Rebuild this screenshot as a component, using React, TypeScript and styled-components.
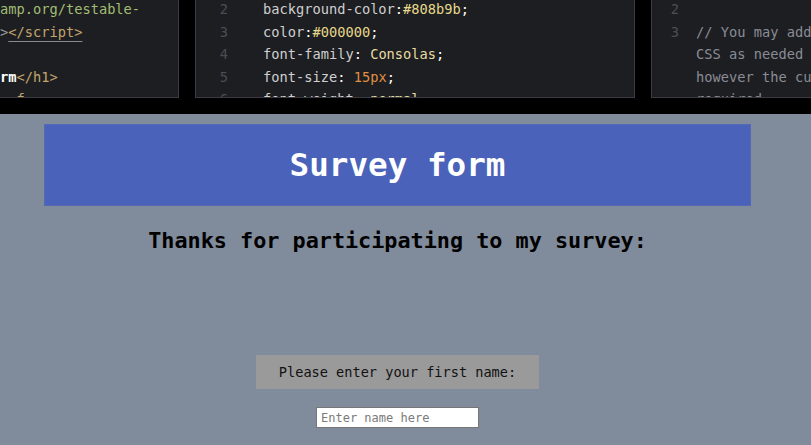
import React from "react";
import styled, { createGlobalStyle } from "styled-components";

const Global = createGlobalStyle`
  html, body { margin: 0; padding: 0; background: #000; overflow: hidden; }
  #root { width: 811px; height: 445px; }
  * { box-sizing: border-box; }
`;

const MONO = `"DejaVu Sans Mono", "Liberation Mono", monospace`;

const Page = styled.div`
  width: 811px;
  height: 445px;
  display: flex;
  flex-direction: column;
  background: #000;
`;

const Editors = styled.div`
  height: 98px;
  display: flex;
  gap: 16px;
  background: #000;
  flex: none;
`;

const Pane = styled.div<{ $w?: number; $left?: boolean; $right?: boolean }>`
  ${(p) => (p.$w ? `width: ${p.$w}px; flex: none;` : "flex: 1;")}
  height: 98px;
  background: #1d1e22;
  border-bottom: 1px solid #3b3c42;
  ${(p) => (p.$left ? "border-left: 1px solid #3b3c42;" : "")}
  ${(p) => (p.$right ? "border-right: 1px solid #3b3c42;" : "")}
  overflow: hidden;
`;

const Code = styled.div`
  margin-top: -2px;
  font-family: ${MONO};
  font-size: 13.7px;
  line-height: 22.5px;
  white-space: pre;
`;

const Line = styled.div`
  display: flex;
  height: 22.5px;
`;

const Num = styled.span<{ $w: number; $gap: number }>`
  width: ${(p) => p.$w}px;
  margin-right: ${(p) => p.$gap}px;
  text-align: right;
  color: #4b4d55;
  flex: none;
`;

const Txt = styled.span<{ $c?: string; $b?: boolean; $u?: boolean }>`
  color: ${(p) => p.$c || "#d8d8d8"};
  ${(p) => (p.$b ? "font-weight: bold;" : "")}
  ${(p) => (p.$u ? "text-decoration: underline; text-decoration-color: #8a8a8a; text-underline-offset: 4px;" : "")}
`;

const Resizer = styled.div`
  height: 16px;
  background: #000;
  flex: none;
`;

const Preview = styled.div`
  flex: 1;
  background: #808b9b;
  padding: 10px 0 0 44px;
`;

const Column = styled.div`
  width: 707px;
  display: flex;
  flex-direction: column;
  align-items: center;
  font-family: ${MONO};
`;

const Header = styled.header`
  width: 707px;
  height: 82px;
  background: #4a62ba;
  border: 1px solid #5468b4;
  display: flex;
  align-items: center;
  justify-content: center;
`;

const Title = styled.h1`
  margin: 0;
  color: #fff;
  font-size: 32.6px;
  font-weight: bold;
  font-family: ${MONO};
`;

const Lead = styled.h2`
  margin: 22px 0 0;
  font-size: 21.8px;
  line-height: 26px;
  font-weight: bold;
  color: #000;
  font-family: ${MONO};
`;

const LabelBox = styled.label`
  margin-top: 101px;
  width: 283px;
  height: 34px;
  background: #9a9a9a;
  color: #111;
  font-size: 13.6px;
  display: flex;
  align-items: center;
  justify-content: center;
  font-family: ${MONO};
`;

const NameInput = styled.input`
  margin-top: 18px;
  width: 163px;
  height: 21px;
  background: #fff;
  border: 1px solid #767676;
  padding: 0 4px;
  font-family: ${MONO};
  font-size: 12px;
  outline: none;
  &::placeholder { color: #7a7a7a; }
`;

export default function App() {
  return (
    <Page>
      <Global />
      <Editors>
        <Pane $w={179} $right>
          <Code>
            <Line><Txt $c="#a2bd72">amp.org/testable-</Txt></Line>
            <Line><Txt $c="#9a9a9a">&gt;</Txt><Txt $c="#c2a56d" $u>&lt;/script&gt;</Txt></Line>
            <Line> </Line>
            <Line><Txt $c="#ffffff" $b>rm</Txt><Txt $c="#c2a56d">&lt;/h1&gt;</Txt></Line>
            <Line><Txt $c="#ffffff">  </Txt><Txt $c="#c2a56d">f</Txt></Line>
          </Code>
        </Pane>
        <Pane $w={440} $left $right>
          <Code>
            <Line><Num $w={32} $gap={35}>2</Num><Txt $c="#cfcfcf">background-color</Txt><Txt $c="#fff">:</Txt><Txt $c="#e7d98b">#808b9b</Txt><Txt $c="#fff">;</Txt></Line>
            <Line><Num $w={32} $gap={35}>3</Num><Txt $c="#cfcfcf">color</Txt><Txt $c="#fff">:</Txt><Txt $c="#e7d98b">#000000</Txt><Txt $c="#fff">;</Txt></Line>
            <Line><Num $w={32} $gap={35}>4</Num><Txt $c="#cfcfcf">font-family</Txt><Txt $c="#fff">: </Txt><Txt $c="#e7dba0">Consolas</Txt><Txt $c="#fff">;</Txt></Line>
            <Line><Num $w={32} $gap={35}>5</Num><Txt $c="#cfcfcf">font-size</Txt><Txt $c="#fff">: </Txt><Txt $c="#e08f43">15px</Txt><Txt $c="#fff">;</Txt></Line>
            <Line><Num $w={32} $gap={35}>6</Num><Txt $c="#cfcfcf">font-weight</Txt><Txt $c="#fff">: </Txt><Txt $c="#e7dba0">normal</Txt><Txt $c="#fff">;</Txt></Line>
          </Code>
        </Pane>
        <Pane $left>
          <Code>
            <Line><Num $w={27} $gap={17}>2</Num></Line>
            <Line><Num $w={27} $gap={17}>3</Num><Txt $c="#8a8c95">// You may add</Txt></Line>
            <Line><Num $w={27} $gap={17}> </Num><Txt $c="#8a8c95">CSS as needed</Txt></Line>
            <Line><Num $w={27} $gap={17}> </Num><Txt $c="#8a8c95">however the cu</Txt></Line>
            <Line><Num $w={27} $gap={17}> </Num><Txt $c="#8a8c95">required</Txt></Line>
          </Code>
        </Pane>
      </Editors>
      <Resizer />
      <Preview>
        <Column>
          <Header>
            <Title>Survey form</Title>
          </Header>
          <Lead>Thanks for participating to my survey:</Lead>
          <LabelBox htmlFor="name">Please enter your first name:</LabelBox>
          <NameInput id="name" type="text" placeholder="Enter name here" />
        </Column>
      </Preview>
    </Page>
  );
}
